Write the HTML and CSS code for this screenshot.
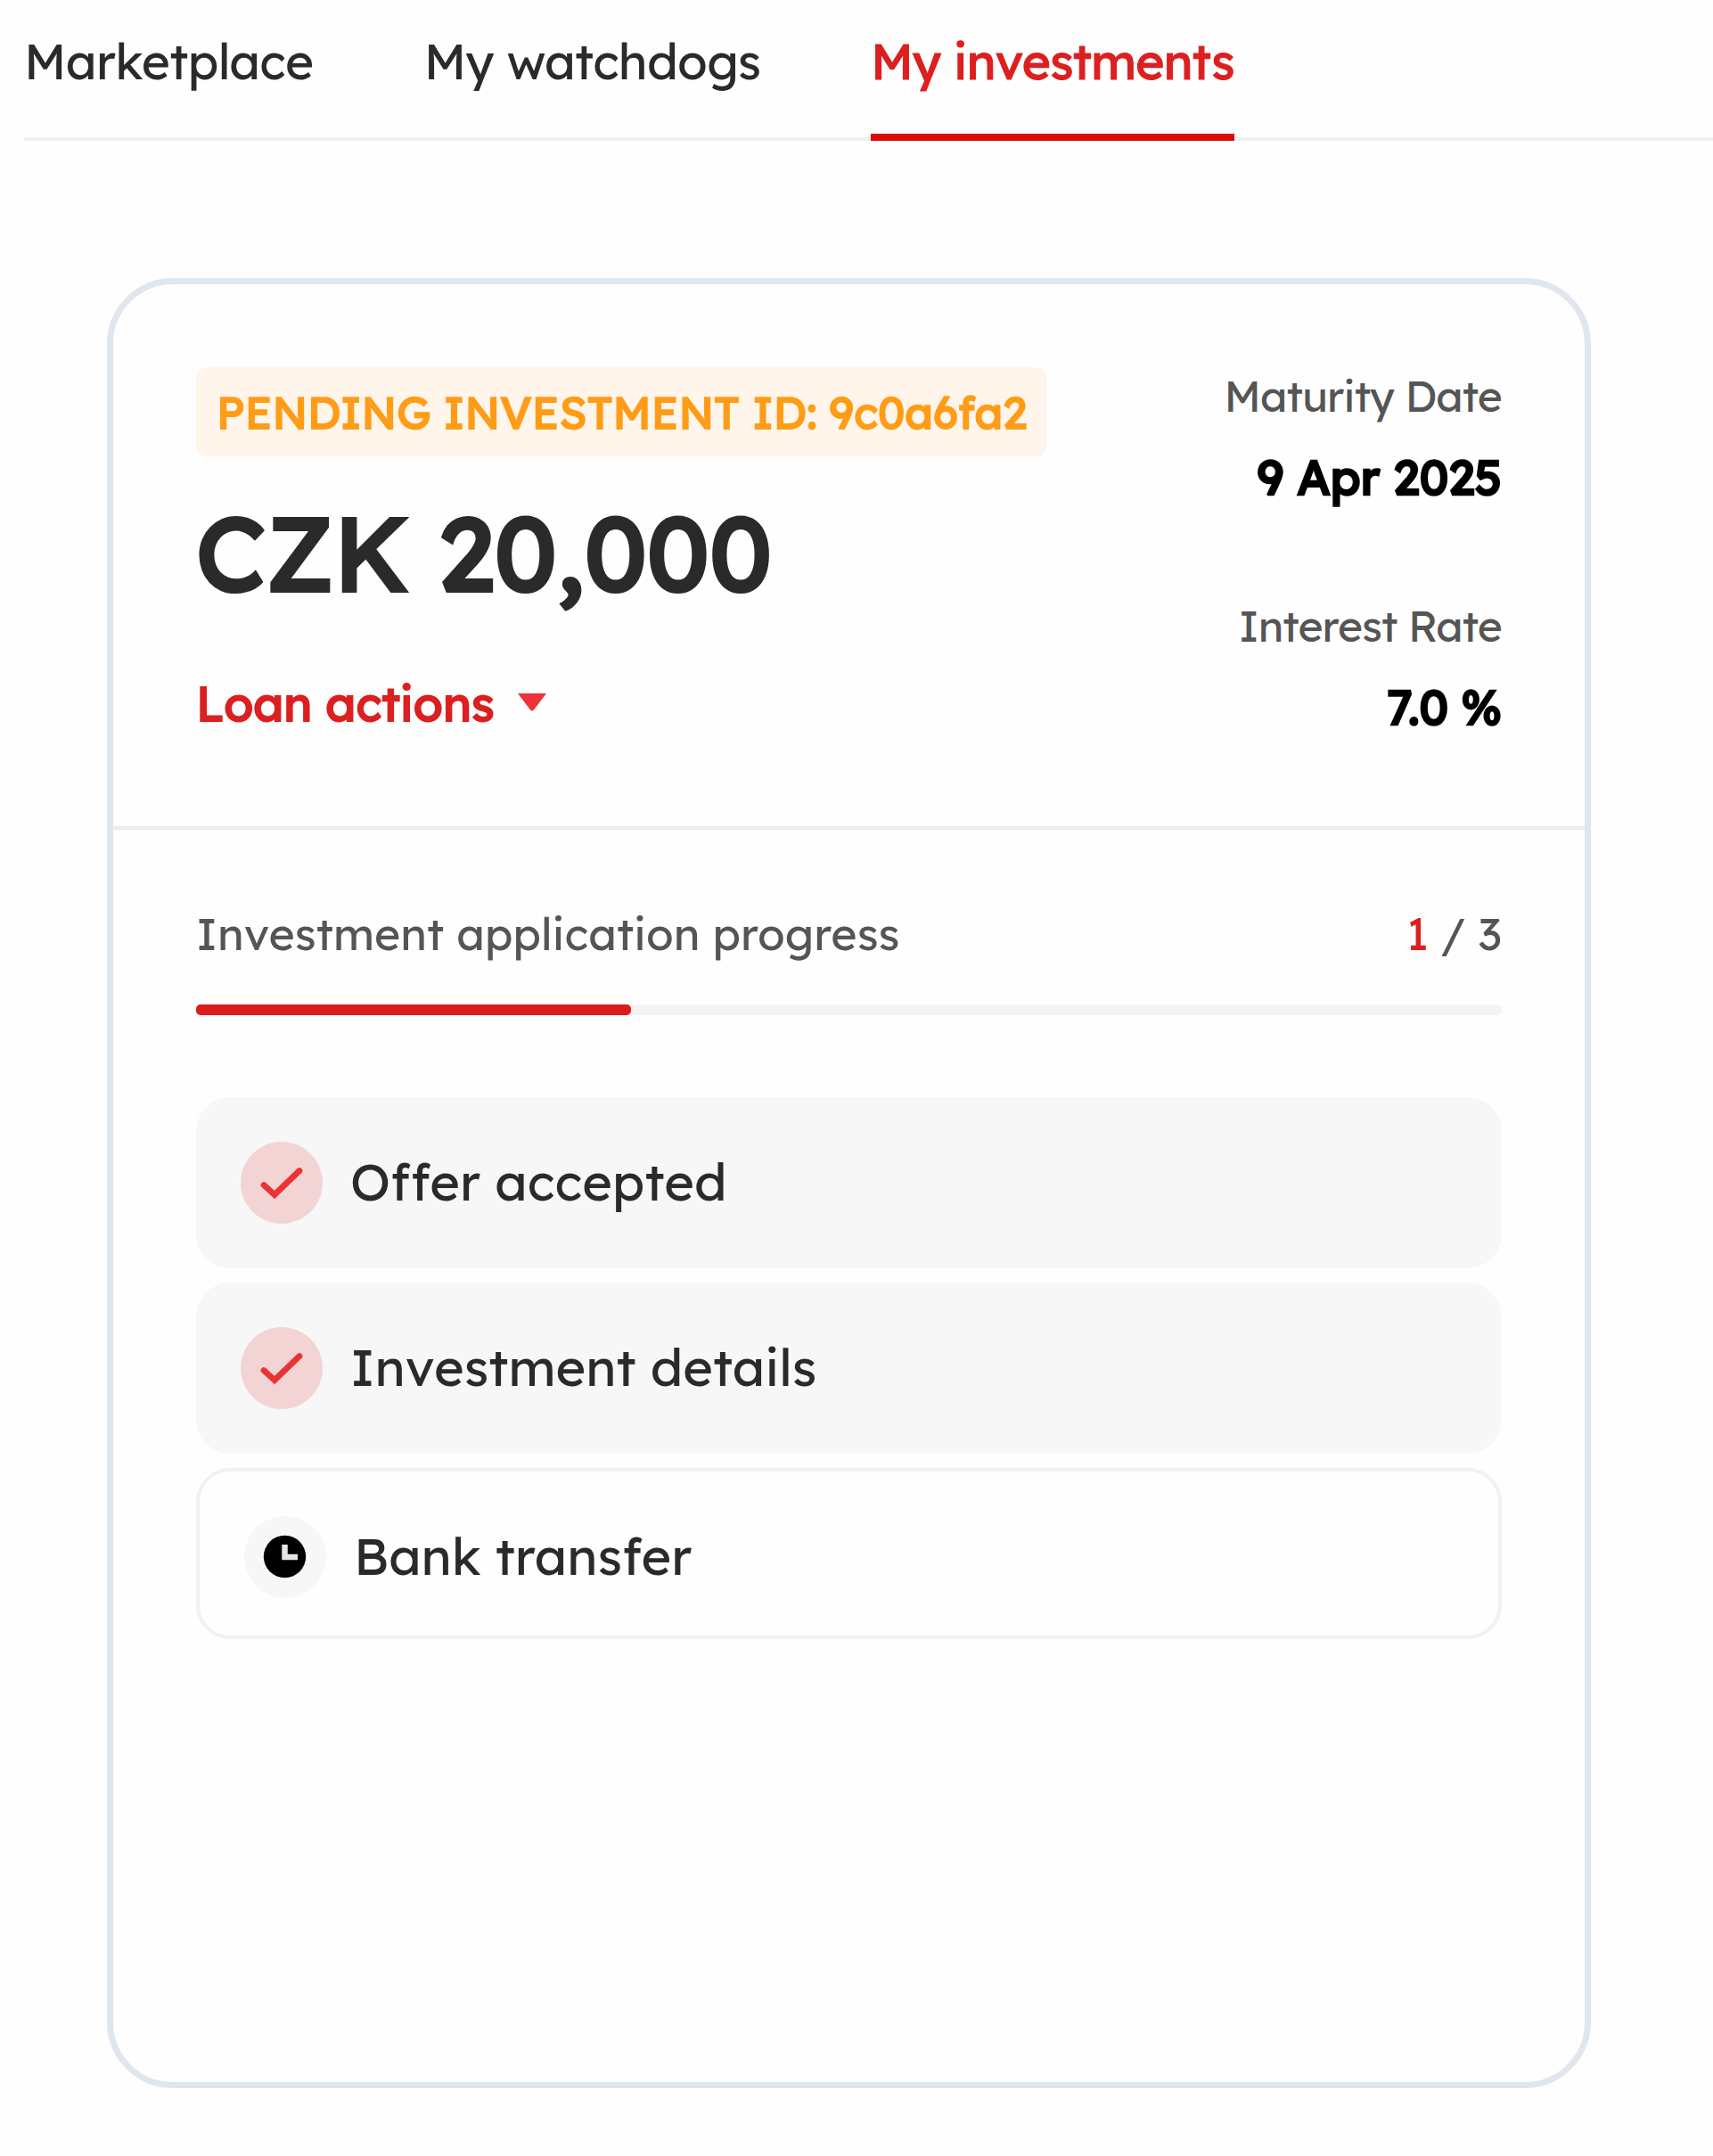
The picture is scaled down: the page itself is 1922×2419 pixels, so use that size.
FILE: index.html
```
<!DOCTYPE html>
<html lang="en">
<head>
<meta charset="utf-8">
<title>My investments</title>
<link rel="stylesheet" href="styles.css">
</head>
<body>
<nav class="tabs">
  <a class="tab">Marketplace</a>
  <a class="tab">My watchdogs</a>
  <a class="tab tab-active">My investments</a>
</nav>
<main class="card">
  <header class="summary">
    <div class="summary-main">
      <div class="badge">PENDING INVESTMENT ID: 9c0a6fa2</div>
      <h1 class="amount">CZK 20,000</h1>
      <div class="actions"><span>Loan actions</span>
        <svg class="caret" viewBox="0 0 32 20"><path d="M0 0H32L18 18.5Q16 20.500 14 18.500Z"/></svg>
      </div>
    </div>
    <dl class="facts">
      <dt>Maturity Date</dt>
      <dd>9 Apr 2025</dd>
      <dt>Interest Rate</dt>
      <dd>7.0 %</dd>
    </dl>
  </header>
  <section class="progress">
    <div class="progress-head">
      <span>Investment application progress</span>
      <span><span class="count-now">1</span> / 3</span>
    </div>
    <div class="track"><div class="fill"></div></div>
    <ul class="steps">
      <li class="step">
        <span class="dot dot-done"><svg viewBox="0 0 92 92"><path class="check" d="M26 48.500L38 59.500L66 32.500"/></svg></span>
        <span class="step-name">Offer accepted</span>
      </li>
      <li class="step">
        <span class="dot dot-done"><svg viewBox="0 0 92 92"><path class="check" d="M26 48.500L38 59.500L66 32.500"/></svg></span>
        <span class="step-name">Investment details</span>
      </li>
      <li class="step step-open">
        <span class="dot dot-wait"><svg viewBox="0 0 92 92"><circle cx="45.500" cy="45.500" r="23.700"/><path class="hands" d="M45.500 32V46H60"/></svg></span>
        <span class="step-name">Bank transfer</span>
      </li>
    </ul>
  </section>
</main>
</body>
</html>
```
FILE: styles.css
```
* { box-sizing: border-box; }
body {
  margin: 0;
  background: #fefefe;
  color: #2a2a2a;
  font-family: Lexend, Inter, "Open Sans", sans-serif;
  white-space: nowrap;
}
.tabs {
  display: flex;
  gap: 124px;
  height: 158px;
  margin-left: 27px;
  padding-top: 33px;
  box-shadow: inset 0 -4px #f0f0f0;
}
.tab { font-size: 55px; line-height: 72px; height: 125px; letter-spacing: -0.7px; }
.tab-active {
  color: #dc1f1f;
  border-bottom: 8px solid #dc0c0c;
  -webkit-text-stroke: 0.02em;
}
.card {
  width: 1665px;
  height: 2031px;
  margin: 154px 0 0 120px;
  border: 7px solid #dfe6f0;
  border-radius: 74px;
}
.summary {
  display: flex;
  justify-content: space-between;
  height: 612px;
  padding: 93px 93px 0;
  border-bottom: 4px solid #ebebeb;
}
.badge {
  width: 954px;
  height: 100px;
  padding: 3px 0 0 23px;
  border-radius: 12px;
  background: #fff5eb;
  color: #ff9c16;
  font-size: 50px;
  line-height: 96px;
  -webkit-text-stroke: 0.035em;
}
.amount {
  margin: 38px 0 0;
  font-size: 115.5px;
  line-height: 140px;
  font-weight: 400;
  -webkit-text-stroke: 0.036em;
}
.actions {
  display: flex;
  align-items: center;
  gap: 26px;
  margin-top: 67px;
  color: #dc1f1f;
  font-size: 53.8px;
  line-height: 64px;
  -webkit-text-stroke: 0.035em;
}
.caret { width: 32px; height: 20px; margin-bottom: 3px; fill: #ed3338; -webkit-text-stroke: 0; }
.facts { margin: 4px 0 0; text-align: right; }
.facts dt { font-size: 48px; line-height: 56px; letter-spacing: -1px; color: #555; }
.facts dd {
  margin: 31px 0 107px;
  font-size: 53.6px;
  line-height: 64px;
  color: #000;
  -webkit-text-stroke: 0.05em;
}
.progress { padding: 89px 93px 0; }
.progress-head {
  display: flex;
  justify-content: space-between;
  font-size: 50px;
  line-height: 56px;
  color: #555;
}
.count-now { color: #dc1f1f; }
.track { height: 12px; margin-top: 51px; border-radius: 5px; background: #f4f4f4; }
.fill { width: 33.33%; height: 12px; border-radius: 5px; background: #dc1b1b; }
.steps {
  display: flex;
  flex-direction: column;
  gap: 16px;
  margin: 92px 0 0;
  padding: 0;
  list-style: none;
}
.step {
  display: flex;
  align-items: center;
  gap: 31px;
  height: 192px;
  padding-left: 50px;
  border-radius: 38px;
  background: #f7f7f7;
  font-size: 57.6px;
}
.step-name { padding-bottom: 4px; }
.step-open { padding-top: 7px; border: 4px solid #f1f1f1; background: #fefefe; }
.dot { width: 92px; height: 92px; border-radius: 50%; }
.dot svg { display: block; width: 92px; height: 92px; }
.dot-done { background: #f3d4d4; }
.dot-wait { background: #f7f7f7; }
.check { fill: none; stroke: #e93436; stroke-width: 6.8; stroke-linecap: round; stroke-linejoin: miter; }
.hands { fill: none; stroke: #e4e4e4; stroke-width: 6.5; }
```
